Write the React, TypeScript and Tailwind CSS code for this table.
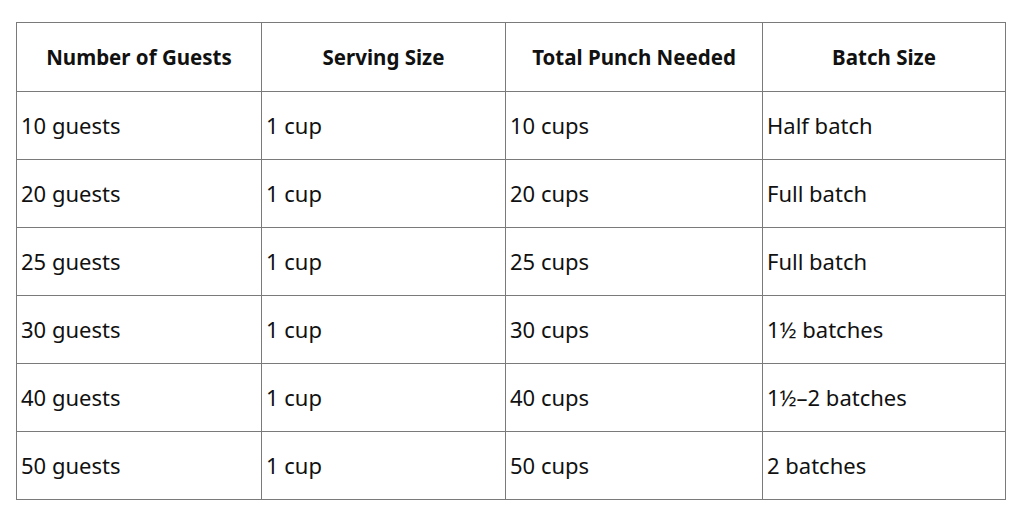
const filas = [
  ['10 guests', '1 cup', '10 cups', 'Half batch'],
  ['20 guests', '1 cup', '20 cups', 'Full batch'],
  ['25 guests', '1 cup', '25 cups', 'Full batch'],
  ['30 guests', '1 cup', '30 cups', '1½ batches'],
  ['40 guests', '1 cup', '40 cups', '1½–2 batches'],
  ['50 guests', '1 cup', '50 cups', '2 batches'],
];

const encabezados = ['Number of Guests', 'Serving Size', 'Total Punch Needed', 'Batch Size'];
const anchos = ['w-[245px]', 'w-[244px]', 'w-[257px]', 'w-[243px]'];

export default function App() {
  return (
    <div className="w-[1024px] h-[512px] bg-white pt-[22px] pl-[16px] font-['Noto_Sans',sans-serif] text-[#111]">
      <table className="table-fixed border-collapse w-[990px]">
        <thead>
          <tr className="h-[69px]">
            {encabezados.map((h, i) => (
              <th
                key={h}
                className={`${anchos[i]} border border-[#7a7a7a] text-center text-[20.5px] font-bold align-middle`}
              >
                {h}
              </th>
            ))}
          </tr>
        </thead>
        <tbody>
          {filas.map((fila) => (
            <tr key={fila[0]} className="h-[68px]">
              {fila.map((c, i) => (
                <td
                  key={i}
                  className="border border-[#7a7a7a] pl-[4px] text-left text-[22px] align-middle"
                >
                  {c}
                </td>
              ))}
            </tr>
          ))}
        </tbody>
      </table>
    </div>
  );
}
